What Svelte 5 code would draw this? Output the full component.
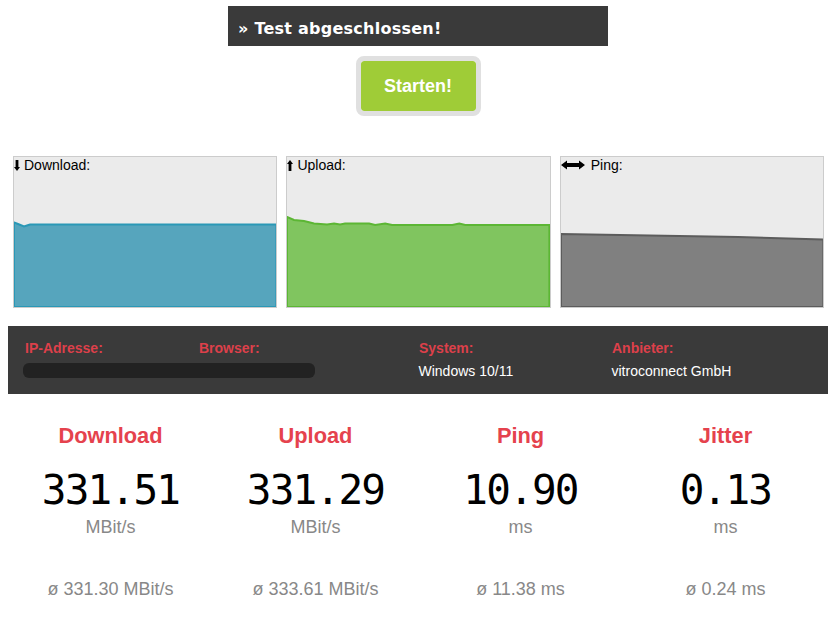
<script lang="ts">
	const infoItems = [
		{ label: 'IP-Adresse:', value: '', hidden: true },
		{ label: 'Browser:', value: '' },
		{ label: 'System:', value: 'Windows 10/11' },
		{ label: 'Anbieter:', value: 'vitroconnect GmbH' }
	];

	const stats = [
		{ title: 'Download', value: '331.51', unit: 'MBit/s', avg: 'ø 331.30 MBit/s' },
		{ title: 'Upload', value: '331.29', unit: 'MBit/s', avg: 'ø 333.61 MBit/s' },
		{ title: 'Ping', value: '10.90', unit: 'ms', avg: 'ø 11.38 ms' },
		{ title: 'Jitter', value: '0.13', unit: 'ms', avg: 'ø 0.24 ms' }
	];

	const charts = [
		{
			name: 'download',
			label: 'Download:',
			line: 'M0 65.5 L4 67 L10 69.5 L13 68.5 L16 67.5 L262 67.5'
		},
		{
			name: 'upload',
			label: 'Upload:',
			line: 'M0 60 L7 63 L17 64 L27 66.5 L40 67.5 L47 66.5 L53 67.5 L58 66.5 L82 66.5 L88 68 L98 66.5 L105 68 L165 68 L172 66.5 L178 68 L262 68'
		},
		{
			name: 'ping',
			label: 'Ping:',
			line: 'M0 77 L177 80 L262 82.5'
		}
	];
</script>

<main class="page">
	<div class="status">» Test abgeschlossen!</div>
	<button type="button" class="start">Starten!</button>

	<section class="charts">
		{#each charts as c (c.name)}
			<div class="chart {c.name}">
				<svg class="plot" viewBox="0 0 262 150" preserveAspectRatio="none" aria-hidden="true">
					<path class="area" d="{c.line} L262 150 L0 150 Z" />
				</svg>
				<div class="chart-label">
					{#if c.name === 'download'}
						<svg class="arrow" width="6" height="11" viewBox="0 0 6 11"><path d="M1.6 0h2.8v7H6L3 11 0 7h1.6z" /></svg>
					{:else if c.name === 'upload'}
						<svg class="arrow" width="6" height="11" viewBox="0 0 6 11"><path d="M1.6 11h2.8V4H6L3 0 0 4h1.6z" /></svg>
					{:else}
						<svg class="arrow wide" width="24" height="10" viewBox="0 0 24 10"><path d="M0 5 6 .5V3h12V.5L24 5l-6 4.5V7H6v2.5z" /></svg>
					{/if}
					<span>{c.label}</span>
				</div>
			</div>
		{/each}
	</section>

	<section class="info">
		{#each infoItems as item (item.label)}
			<div class="info-item">
				<div class="info-label">{item.label}</div>
				<div class="info-value">{item.value}</div>
			</div>
		{/each}
		<div class="blot"></div>
	</section>

	<section class="stats">
		{#each stats as s (s.title)}
			<div class="stat">
				<div class="stat-title">{s.title}</div>
				<div class="stat-value">{s.value}</div>
				<div class="stat-unit">{s.unit}</div>
				<div class="stat-avg">{s.avg}</div>
			</div>
		{/each}
	</section>
</main>

<style>
	:global(body) {
		margin: 0;
		background: #fff;
		font-family: 'Liberation Sans', Arial, sans-serif;
	}

	.page {
		width: 836px;
		display: flex;
		flex-direction: column;
		align-items: center;
		padding-top: 6px;
	}

	.status {
		width: 380px;
		height: 40px;
		box-sizing: border-box;
		padding: 13px 0 0 10px;
		background: #3a3a3a;
		color: #fff;
		font-family: 'DejaVu Sans', sans-serif;
		font-weight: 700;
		font-size: 16px;
		line-height: 20px;
		letter-spacing: 0.25px;
		white-space: nowrap;
	}

	.start {
		margin-top: 10px;
		width: 125px;
		height: 60px;
		box-sizing: border-box;
		border: 5px solid #e0e0e0;
		border-radius: 8px;
		background: #9fcc37;
		background-clip: padding-box;
		color: #fff;
		font-family: 'Liberation Sans', Arial, sans-serif;
		font-weight: 700;
		font-size: 18px;
		padding: 0;
		cursor: pointer;
	}

	.charts {
		align-self: flex-start;
		margin: 40px 0 0 13px;
		display: flex;
		gap: 9px;
	}

	.chart {
		position: relative;
		width: 264.4px;
		height: 152px;
		box-sizing: border-box;
		border: 1px solid #ccc;
		background: #ebebeb;
	}

	.plot {
		display: block;
		width: 100%;
		height: 150px;
	}

	.area {
		stroke-width: 2;
	}

	.download .area {
		fill: #56a5bd;
		stroke: #2a98b6;
	}

	.upload .area {
		fill: #80c55f;
		stroke: #5cb634;
	}

	.ping .area {
		fill: #808080;
		stroke: #5c5c5c;
	}

	.chart-label {
		position: absolute;
		top: 0;
		left: 0;
		display: flex;
		align-items: center;
		gap: 4px;
		font-size: 14px;
		line-height: 16px;
		color: #000;
	}

	.arrow {
		fill: #000;
	}

	.wide {
		margin-right: 2px;
	}

	.info {
		position: relative;
		margin-top: 18px;
		width: 820px;
		height: 68px;
		box-sizing: border-box;
		padding: 14px 0 0 17px;
		background: #3a3a3a;
		display: grid;
		grid-template-columns: 174px 220px 193px 1fr;
	}

	.info-label {
		color: #dd404a;
		font-weight: 700;
		font-size: 14px;
		line-height: 16px;
	}

	.info-value {
		margin: 7px 0 0 -0.5px;
		color: #fff;
		font-size: 14px;
		line-height: 16px;
	}

	.blot {
		position: absolute;
		left: 15px;
		top: 37px;
		width: 292px;
		height: 15px;
		border-radius: 6px;
		background: #222;
		filter: blur(0.5px);
	}

	.stats {
		width: 820px;
		margin-top: 29px;
		display: grid;
		grid-template-columns: repeat(4, 1fr);
	}

	.stat {
		display: flex;
		flex-direction: column;
		align-items: center;
	}

	.stat-title {
		color: #e5424d;
		font-weight: 700;
		font-size: 21.8px;
		line-height: 26px;
	}

	.stat-value {
		margin-top: 17px;
		color: #000;
		font-family: 'DejaVu Sans Mono', monospace;
		font-size: 41px;
		line-height: 48px;
		letter-spacing: -1.8px;
	}

	.stat-unit {
		margin-top: 3px;
		color: #888;
		font-size: 18px;
		line-height: 20px;
	}

	.stat-avg {
		margin-top: 42px;
		color: #888;
		font-size: 18px;
		line-height: 20px;
	}
</style>
